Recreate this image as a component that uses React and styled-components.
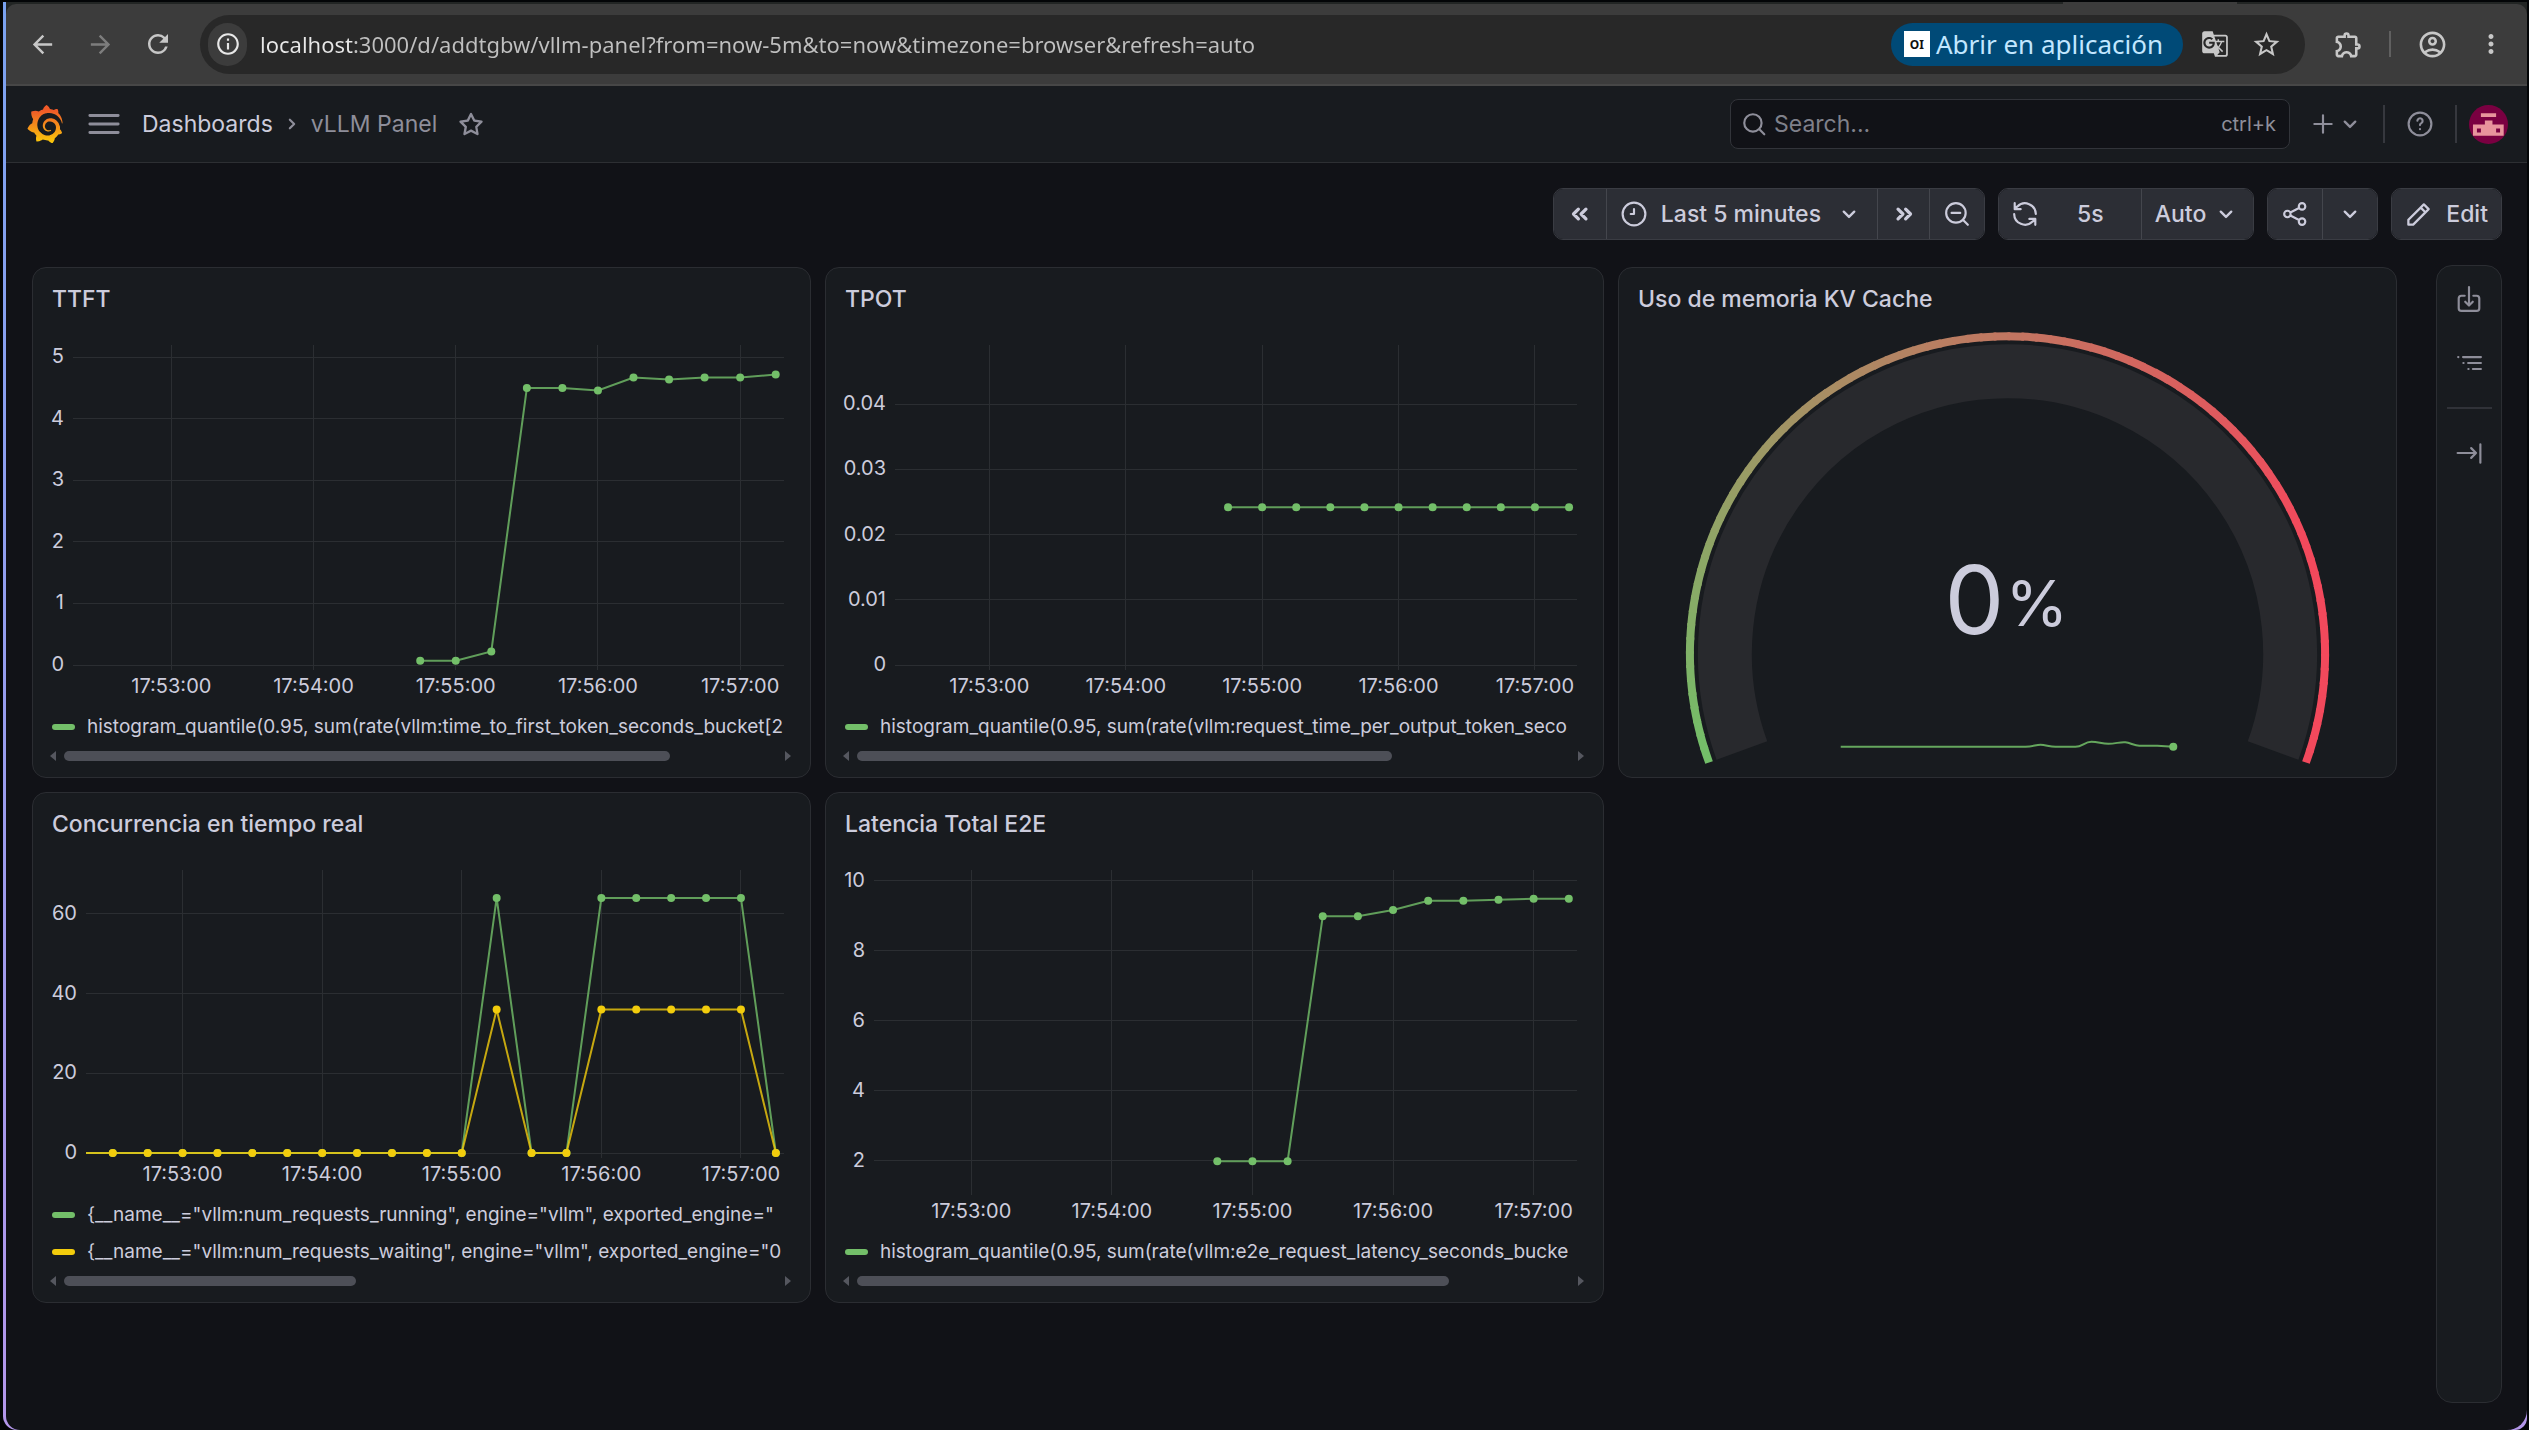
import { useLayoutEffect, useRef, useState } from "react";
import styled, { createGlobalStyle, css } from "styled-components";
import {
  MdArrowBack,
  MdArrowForward,
  MdGTranslate,
  MdMoreVert,
  MdOutlineAccountCircle,
  MdOutlineExtension,
  MdOutlineInfo,
  MdRefresh,
  MdStarBorder,
} from "react-icons/md";
import { SiGrafana } from "react-icons/si";

const GREEN = "#73bf69";
const YELLOW = "#f2cc0c";

// Chart time is in seconds, counted from 17:53:00.
const TIME_START = -41.5;
const TIME_RANGE = 300;
const TIME_TICKS = [
  [0, "17:53:00"],
  [60, "17:54:00"],
  [120, "17:55:00"],
  [180, "17:56:00"],
  [240, "17:57:00"],
];

const every15s = (start, values) =>
  values.map((value, index) => [start + index * 15, value]);

const ttft = every15s(
  105,
  [0.07, 0.07, 0.22, 4.5, 4.5, 4.46, 4.67, 4.64, 4.67, 4.67, 4.72]
);
const tpot = every15s(105, new Array(11).fill(0.0242));
const latency = every15s(
  105,
  [1.99, 1.99, 1.99, 8.98, 8.98, 9.16, 9.42, 9.42, 9.45, 9.48, 9.48]
);
const burst = peak =>
  every15s(-45, [
    ...new Array(12).fill(0),
    peak,
    0,
    0,
    ...new Array(5).fill(peak),
    0,
  ]);

const GlobalStyle = createGlobalStyle`
  *, *::before, *::after {
    box-sizing: border-box;
  }

  body {
    margin: 0;
    background: #030507;
    color: #ccccdc;
    font-family: Inter, "Liberation Sans", sans-serif;
    font-size: 23px;
  }

  button, input {
    font: inherit;
    color: inherit;
  }

  svg {
    display: block;
    flex: none;
  }
`;

const Frame = styled.div`
  display: flex;
  min-height: 100vh;
  padding: 2px 2px 0 3px;
`;

const Outline = styled.div`
  display: flex;
  flex: 1;
  min-width: 0;
  padding-left: 3px;
  border-radius: 0 0 12px 14px;
  background: linear-gradient(180deg, #7aa2f0, #b396ea);
`;

const Window = styled.div`
  display: flex;
  flex: 1;
  flex-direction: column;
  min-width: 0;
  overflow: hidden;
  border-radius: 0 0 20px 14px;
  background: #111217;
`;

const TabStrip = styled.div`
  display: flex;
  justify-content: flex-end;
  height: 2px;
  padding-right: 290px;
  background: #222524;
`;

const ActiveTab = styled.div`
  width: 174px;
  background: #3c3c3c;
`;

const TabGround = styled.div`
  background: #222524;
`;

const BrowserBar = styled.div`
  display: flex;
  align-items: center;
  height: 82px;
  padding: 0 18px;
  border-bottom: 2px solid #474747;
  border-radius: 10px 10px 0 0;
  background: #3c3c3c;
  color: #c7c7c7;
  font-family: "Noto Sans", sans-serif;
`;

const BarButton = styled.button`
  display: flex;
  flex: none;
  align-items: center;
  justify-content: center;
  width: ${({ $width }) => $width || 36}px;
  height: 43px;
  padding: 0;
  border: 0;
  border-radius: 22px;
  background: ${({ $filled }) => ($filled ? "#3c3c3c" : "transparent")};
  color: ${({ $color }) => $color || "inherit"};
`;

const BrowserNav = styled.div`
  display: flex;
  gap: 22px;
  margin-right: 24px;
`;

const AddressBar = styled.div`
  display: flex;
  flex: 1;
  align-items: center;
  height: 59px;
  padding: 0 6px 0 8px;
  border-radius: 30px;
  background: #282828;
`;

/* The host is brighter than the path. */
const Url = styled.input`
  flex: 1;
  min-width: 0;
  height: 43px;
  margin-left: 13px;
  padding: 0;
  border: 0;
  outline: 0;
  background: linear-gradient(90deg, #e8e8e8 94px, #c0c0c0 94px);
  background-clip: text;
  color: transparent;
  font-size: 22px;
`;

const OpenInApp = styled.button`
  display: flex;
  align-items: center;
  gap: 6px;
  height: 43px;
  margin-right: 14px;
  padding: 0 20px 0 13px;
  border: 0;
  border-radius: 22px;
  background: #004a77;
  color: #c2e7ff;
  font-size: 26px;
`;

const AppBadge = styled.span`
  display: flex;
  align-items: center;
  justify-content: center;
  width: 26px;
  height: 26px;
  background: #fff;
  color: #111;
  font-size: 12px;
  font-weight: 700;
`;

const BrowserActions = styled.div`
  display: flex;
  align-items: center;
  gap: 23px;
  margin-left: 25px;
`;

const VerticalRule = styled.div`
  width: 2px;
  height: ${({ $height }) => $height}px;
  background: ${({ $color }) => $color};
`;

const TopNav = styled.header`
  display: flex;
  align-items: center;
  height: 77px;
  padding: 0 19px 0 20px;
  border-bottom: 1px solid #2d2f33;
  background: #181b1f;
  color: #8e8e9a;
`;

const Logo = styled(SiGrafana)`
  width: 38px;
  height: 38px;
  fill: url(#grafana-flame);
`;

const NavButton = styled.button`
  display: flex;
  align-items: center;
  gap: 8px;
  padding: 0;
  border: 0;
  background: transparent;
`;

const MenuButton = styled(NavButton)`
  margin: 0 21px 0 23px;
`;

const Breadcrumbs = styled.nav`
  display: flex;
  flex: 1;
  align-items: center;
  gap: 6px;
`;

const Crumb = styled.a`
  color: ${({ $current }) => ($current ? "#8e8e9a" : "#ccccdc")};
  text-decoration: none;
`;

const StarButton = styled(NavButton)`
  margin-left: 14px;
`;

const SearchBox = styled.label`
  display: flex;
  align-items: center;
  gap: 7px;
  width: 560px;
  height: 50px;
  padding: 0 13px 0 10px;
  border: 1px solid #32343a;
  border-radius: 8px;
  background: #111217;
`;

const SearchInput = styled.input`
  flex: 1;
  min-width: 0;
  padding: 0;
  border: 0;
  outline: 0;
  background: transparent;

  &::placeholder {
    color: #7f808a;
    opacity: 1;
  }
`;

const Shortcut = styled.span`
  font-size: 20px;
`;

const NavActions = styled.div`
  display: flex;
  align-items: center;
  gap: 22px;
  margin-left: 20px;
`;

const AddButton = styled(NavButton)`
  gap: 0;
  margin-right: -3px;
`;

const AvatarButton = styled(NavButton)`
  margin-left: -10px;
`;

const Dashboard = styled.main`
  display: flex;
  flex: 1;
  flex-direction: column;
  gap: 25px;
  padding: 25px 25px 27px 26px;
`;

const Toolbar = styled.div`
  display: flex;
  justify-content: flex-end;
  gap: 13px;
`;

const ButtonGroup = styled.div`
  display: flex;
  height: 52px;
  overflow: hidden;
  border: 1px solid #3a3c43;
  border-radius: 10px;
`;

const ToolButton = styled.button`
  display: flex;
  align-items: center;
  justify-content: center;
  gap: ${({ $gap }) => $gap || 14}px;
  min-width: 52px;
  padding: 0 ${({ $pad }) => $pad || 0}px;
  border: 0;
  background: #2c2e35;
  font-weight: 500;

  & + & {
    border-left: 1px solid #44464d;
  }
`;

const Interval = styled.span`
  padding: 0 24px 0 25px;
`;

const Content = styled.div`
  display: flex;
  flex: 1;
  gap: 39px;
`;

const PanelGrid = styled.div`
  display: grid;
  flex: 1;
  grid-template-columns: repeat(3, minmax(0, 1fr));
  grid-auto-rows: minmax(511px, auto);
  align-content: start;
  gap: 14px;
  padding-top: 2px;
`;

const PanelCard = styled.section`
  display: flex;
  flex-direction: column;
  border: 1px solid #2b2d32;
  border-radius: 14px;
  background: #181b1f;
`;

const PanelTitle = styled.h2`
  margin: 0;
  padding: 0 19px;
  font-size: 23px;
  font-weight: 500;
  line-height: 63px;
`;

const PanelBody = styled.div`
  display: flex;
  flex: 1;
  flex-direction: column;
  padding: 0 14px 16px 17px;
`;

const ChartArea = styled.div`
  flex: 1;
  min-height: 240px;
  overflow: hidden;

  text {
    fill: #ccccdc;
    font-size: 20px;
  }
`;

const LegendRow = styled.div`
  display: flex;
  align-items: center;
  gap: 12px;
  height: 37px;
  padding-left: 2px;
  overflow: hidden;
  font-size: 19px;
  white-space: nowrap;
`;

const Swatch = styled.span`
  flex: none;
  width: 23px;
  height: 6px;
  border-radius: 3px;
  background: ${({ $color }) => $color};
`;

const ScrollBar = styled.div`
  display: flex;
  align-items: center;
  gap: 8px;
  height: 10px;
  margin-top: 6px;
  padding-right: 5px;
`;

const ScrollArrow = styled.span`
  border: 5px solid transparent;
  ${({ $side }) =>
    $side === "left"
      ? css`
          border-left-width: 0;
          border-right: 6px solid #55575f;
        `
      : css`
          border-right-width: 0;
          border-left: 6px solid #55575f;
        `}
`;

const ScrollTrack = styled.div`
  flex: 1;
  height: 10px;
`;

const ScrollThumb = styled.div`
  width: ${({ $size }) => $size}%;
  height: 10px;
  border-radius: 5px;
  background: #4d4f57;
`;

const GaugeSvg = styled.svg`
  flex: 1;
  width: 100%;
  min-height: 0;

  text {
    fill: #ccccdc;
  }
`;

const SideBar = styled.aside`
  display: flex;
  flex-direction: column;
  align-items: center;
  gap: 24px;
  width: 66px;
  padding-top: 13px;
  border: 1px solid #2b2d32;
  border-radius: 16px;
  background: #181b1f;
  color: #8e8e9a;
`;

const SideButton = styled.button`
  display: flex;
  align-items: center;
  justify-content: center;
  width: 40px;
  height: 40px;
  padding: 0;
  border: 0;
  background: transparent;
`;

const SideRule = styled.div`
  width: 45px;
  height: 2px;
  background: #303238;
`;

const LINE_ICONS = {
  menu: "M2 6h20M2 12h20M2 18h20",
  search: "M11 3a8 8 0 1 0 0 16a8 8 0 1 0 0-16M16.7 16.7L21.5 21.5",
  zoomOut: "M11 2a9 9 0 1 0 0 18a9 9 0 1 0 0-18M17.4 17.4L22 22M7 11h8",
  clock: "M12 1.5a10.5 10.5 0 1 0 0 21a10.5 10.5 0 1 0 0-21M12 7.5v4.5H9",
  plus: "M12 4v16M4 12h16",
  help: "M12 1.5a10.5 10.5 0 1 0 0 21a10.5 10.5 0 1 0 0-21M9.6 9a2.4 2.4 0 1 1 3.6 2.2c-.8.4-1.2.9-1.2 1.8M12 16.6v.2",
  sync: "M22 12A10 10 0 0 0 5 5L2.5 7M2.5 2v5.5h5.5M2 12a10 10 0 0 0 17 7l2.5-2M21.5 22v-5.5H16",
  share:
    "M18.5 2a3 3 0 1 0 0 6a3 3 0 1 0 0-6M5 9a3 3 0 1 0 0 6a3 3 0 1 0 0-6M18.5 16a3 3 0 1 0 0 6a3 3 0 1 0 0-6M7.7 10.6l8-4.2M7.7 13.4l8 4.2",
  down: "M7.5 10l4.5 4.5L16.5 10",
  right: "M10 8l4 4l-4 4",
  back: "M10.5 7.5L6 12l4.5 4.5M17.5 7.5L13 12l4.5 4.5",
  forward: "M6.5 7.5L11 12l-4.5 4.5M13.5 7.5L18 12l-4.5 4.5",
  import:
    "M8 9H5a2.5 2.5 0 0 0-2.5 2.5v9A2.5 2.5 0 0 0 5 23h14a2.5 2.5 0 0 0 2.5-2.5v-9A2.5 2.5 0 0 0 19 9h-3M12 1v16M8.5 14.5L12 18l3.5-3.5",
  outline:
    "M2 6.5h.2M6.5 6.5H23M6.8 12h.2M11.2 12H23M11.4 17.5h.2M15.6 17.5H23",
  collapse: "M1.5 12h17M14 7.5l4.5 4.5l-4.5 4.5M22.5 4v17",
};

const LineIcon = ({ name, size = 26, weight = 2 }) => (
  <svg
    width={size}
    height={size}
    viewBox="0 0 24 24"
    fill="none"
    stroke="currentColor"
    strokeWidth={weight}
    strokeLinecap="round"
    strokeLinejoin="round"
    aria-hidden="true"
  >
    <path d={LINE_ICONS[name]} />
  </svg>
);

const StarIcon = () => (
  <svg width="28" height="28" viewBox="0 0 24 24" fill="currentColor">
    <path d="M22,9.67A1,1,0,0,0,21.14,9l-5.69-.83L12.9,3a1,1,0,0,0-1.8,0L8.55,8.16,2.86,9a1,1,0,0,0-.81.68,1,1,0,0,0,.25,1l4.13,4-1,5.68A1,1,0,0,0,6.9,21.44L12,18.77l5.1,2.67a.93.93,0,0,0,.46.12,1,1,0,0,0,.59-.19,1,1,0,0,0,.4-1l-1-5.68,4.13-4A1,1,0,0,0,22,9.67Zm-6.15,4a1,1,0,0,0-.29.88l.72,4.2-3.76-2a1.06,1.06,0,0,0-.94,0l-3.76,2,.72-4.2a1,1,0,0,0-.29-.88l-3-3,4.21-.61a1,1,0,0,0,.76-.55L12,5.7l1.88,3.82a1,1,0,0,0,.76.55l4.21.61Z" />
  </svg>
);

const PenIcon = () => (
  <svg width="27" height="27" viewBox="0 0 24 24" fill="currentColor">
    <path d="M22,7.24a1,1,0,0,0-.29-.71L17.47,2.29A1,1,0,0,0,16.76,2a1,1,0,0,0-.71.29L13.22,5.12h0L2.29,16.05a1,1,0,0,0-.29.71V21a1,1,0,0,0,1,1H7.24A1,1,0,0,0,8,21.71L18.87,10.78h0L21.71,8a1.19,1.19,0,0,0,.22-.33,1,1,0,0,0,0-.24.7.7,0,0,0,0-.14ZM6.83,20H4V17.17l9.93-9.93,2.83,2.83ZM18.17,8.66,15.34,5.83l1.42-1.41,2.82,2.82Z" />
  </svg>
);

const Avatar = () => (
  <svg width="39" height="39" viewBox="0 0 118 118">
    <circle cx="59" cy="59" r="59" fill="#7a0041" />
    <path
      fill="#e8949c"
      fillRule="evenodd"
      d="M36 25h46v11H36zM48 47h23v12h34v34H12V59h36zM24 71v12h12V71zM82 71v12h12V71z"
    />
  </svg>
);

const GradientDefs = () => (
  <svg width="0" height="0" aria-hidden="true">
    <linearGradient id="grafana-flame" x1="0" y1="0" x2="0" y2="1">
      <stop offset="0.15" stopColor="#f05a28" />
      <stop offset="1" stopColor="#fbca0a" />
    </linearGradient>
  </svg>
);

const TimeChart = ({ axisWidth, min = 0, max, ticks, series }) => {
  const areaRef = useRef(null);
  const [size, setSize] = useState({ width: 0, height: 0 });

  useLayoutEffect(() => {
    const area = areaRef.current;
    const measure = () =>
      setSize({ width: area.clientWidth, height: area.clientHeight });
    const observer = new ResizeObserver(measure);

    measure();
    observer.observe(area);

    return () => observer.disconnect();
  }, []);

  const left = axisWidth;
  const right = size.width - 12;
  const top = 14;
  const bottom = size.height - 43;
  const toX = time =>
    left + ((time - TIME_START) / TIME_RANGE) * (right - left);
  const toY = value =>
    bottom - ((value - min) / (max - min)) * (bottom - top);
  const snap = n => Math.floor(n) + 0.5;
  const clipId = `plot-${axisWidth}`;

  return (
    <ChartArea ref={areaRef}>
      {size.width > 0 && (
        <svg width={size.width} height={size.height - 4}>
          <clipPath id={clipId}>
            <rect x={left} y="0" width={right - left + 6} height={size.height} />
          </clipPath>
          <g stroke="#2b2e32">
            {ticks.map(tick => (
              <line
                key={tick}
                x1={left}
                x2={right}
                y1={snap(toY(tick))}
                y2={snap(toY(tick))}
              />
            ))}
            {TIME_TICKS.map(([time]) => (
              <line
                key={time}
                x1={snap(toX(time))}
                x2={snap(toX(time))}
                y1={top}
                y2={bottom + 5}
              />
            ))}
          </g>
          {ticks.map(tick => (
            <text key={tick} x={left - 9} y={toY(tick) + 6} textAnchor="end">
              {tick}
            </text>
          ))}
          {TIME_TICKS.map(([time, label]) => (
            <text key={time} x={toX(time)} y={bottom + 28} textAnchor="middle">
              {label}
            </text>
          ))}
          <g clipPath={`url(#${clipId})`}>
            {series.map(({ color, points }) => (
              <g key={color} fill={color}>
                <polyline
                  fill="none"
                  stroke={color}
                  strokeWidth="2"
                  strokeOpacity="0.8"
                  points={points
                    .map(([time, value]) => `${toX(time)},${toY(value)}`)
                    .join(" ")}
                />
                {points.map(([time, value]) => (
                  <circle key={time} cx={toX(time)} cy={toY(value)} r="4" />
                ))}
              </g>
            ))}
          </g>
        </svg>
      )}
    </ChartArea>
  );
};

const ChartPanel = ({ title, legend, scroll, ...chart }) => (
  <PanelCard>
    <PanelTitle>{title}</PanelTitle>
    <PanelBody>
      <TimeChart {...chart} />
      {legend.map(({ color, label }) => (
        <LegendRow key={label}>
          <Swatch $color={color} />
          {label}
        </LegendRow>
      ))}
      <ScrollBar>
        <ScrollArrow $side="left" />
        <ScrollTrack>
          <ScrollThumb $size={scroll} />
        </ScrollTrack>
        <ScrollArrow $side="right" />
      </ScrollBar>
    </PanelBody>
  </PanelCard>
);

const GAUGE_SWEEP = 220;
const GAUGE_STEPS = 88;

const gaugePoint = (radius, fraction) => {
  const angle = ((fraction - 0.5) * GAUGE_SWEEP * Math.PI) / 180;

  return `${radius * Math.sin(angle)} ${-radius * Math.cos(angle)}`;
};

const gaugeArc = (radius, from, to) => {
  const large = (to - from) * GAUGE_SWEEP > 180 ? 1 : 0;

  return `M${gaugePoint(radius, from)}A${radius} ${radius} 0 ${large} 1 ${gaugePoint(
    radius,
    to
  )}`;
};

// Green blends into red up to the 80% threshold and stays red after it.
const gaugeColor = fraction => {
  const mix = Math.min(fraction / 0.8, 1);
  const channel = (from, to) => Math.round(from + (to - from) * mix);

  return `rgb(${channel(115, 242)}, ${channel(191, 73)}, ${channel(105, 92)})`;
};

const GaugePanel = () => (
  <PanelCard>
    <PanelTitle>Uso de memoria KV Cache</PanelTitle>
    <GaugeSvg viewBox="-389 -323 778 446">
      <path
        d={gaugeArc(283, 0, 1)}
        fill="none"
        stroke="#28292d"
        strokeWidth="54"
      />
      {Array.from({ length: GAUGE_STEPS }, (_, step) => (
        <path
          key={step}
          d={gaugeArc(
            318,
            step / GAUGE_STEPS,
            Math.min((step + 1.2) / GAUGE_STEPS, 1)
          )}
          fill="none"
          stroke={gaugeColor(step / GAUGE_STEPS)}
          strokeWidth="8"
        />
      ))}
      <text x="-63" y="-20" fontSize="95">
        0
      </text>
      <text x="-2" y="-28" fontSize="64">
        %
      </text>
      <path
        d="M-167 93H18C26 93 28 91 33 91S42 93 48 93H68C75 93 77 88 84 88S94 90 101 90S113 88 118 88.500S127 92 132 92H150L166 93"
        fill="none"
        stroke={GREEN}
        strokeWidth="2"
        strokeOpacity="0.85"
      />
      <circle cx="166" cy="93" r="4" fill={GREEN} />
    </GaugeSvg>
  </PanelCard>
);

const Browser = () => (
  <>
    <TabStrip>
      <ActiveTab />
    </TabStrip>
    <TabGround>
      <BrowserBar>
        <BrowserNav>
          <BarButton aria-label="Back">
            <MdArrowBack size={29} />
          </BarButton>
          <BarButton aria-label="Forward" $color="#7d7d7d">
            <MdArrowForward size={29} />
          </BarButton>
          <BarButton aria-label="Reload">
            <MdRefresh size={30} />
          </BarButton>
        </BrowserNav>
        <AddressBar>
          <BarButton
            aria-label="Site information"
            $width={39}
            $filled
            $color="#e8e8e8"
          >
            <MdOutlineInfo size={26} />
          </BarButton>
          <Url
            aria-label="Address"
            spellCheck={false}
            defaultValue="localhost:3000/d/addtgbw/vllm-panel?from=now-5m&to=now&timezone=browser&refresh=auto"
          />
          <OpenInApp>
            <AppBadge>OI</AppBadge>
            Abrir en aplicación
          </OpenInApp>
          <BarButton aria-label="Translate" $width={36}>
            <MdGTranslate size={28} />
          </BarButton>
          <BarButton aria-label="Bookmark" $width={66}>
            <MdStarBorder size={31} />
          </BarButton>
        </AddressBar>
        <BrowserActions>
          <BarButton aria-label="Extensions">
            <MdOutlineExtension size={31} />
          </BarButton>
          <VerticalRule $height={26} $color="#606060" />
          <BarButton aria-label="Profile">
            <MdOutlineAccountCircle size={31} />
          </BarButton>
          <BarButton aria-label="More">
            <MdMoreVert size={30} />
          </BarButton>
        </BrowserActions>
      </BrowserBar>
    </TabGround>
  </>
);

const Nav = () => (
  <TopNav>
    <Logo />
    <MenuButton aria-label="Menu">
      <LineIcon name="menu" size={34} />
    </MenuButton>
    <Breadcrumbs>
      <Crumb href="#dashboards">Dashboards</Crumb>
      <LineIcon name="right" size={26} />
      <Crumb href="#panel" $current>
        vLLM Panel
      </Crumb>
      <StarButton aria-label="Mark as favorite">
        <StarIcon />
      </StarButton>
    </Breadcrumbs>
    <SearchBox>
      <LineIcon name="search" size={26} />
      <SearchInput type="text" aria-label="Search" placeholder="Search..." />
      <Shortcut>ctrl+k</Shortcut>
    </SearchBox>
    <NavActions>
      <AddButton aria-label="New">
        <LineIcon name="plus" size={26} />
        <LineIcon name="down" size={28} />
      </AddButton>
      <VerticalRule $height={38} $color="#36383e" />
      <NavButton aria-label="Help">
        <LineIcon name="help" size={26} />
      </NavButton>
      <VerticalRule $height={38} $color="#36383e" />
      <AvatarButton aria-label="Profile">
        <Avatar />
      </AvatarButton>
    </NavActions>
  </TopNav>
);

const DashboardToolbar = () => (
  <Toolbar>
    <ButtonGroup>
      <ToolButton aria-label="Move time range backwards">
        <LineIcon name="back" weight={3} />
      </ToolButton>
      <ToolButton $pad={14}>
        <LineIcon name="clock" />
        Last 5 minutes
        <LineIcon name="down" size={28} />
      </ToolButton>
      <ToolButton aria-label="Move time range forwards">
        <LineIcon name="forward" weight={3} />
      </ToolButton>
      <ToolButton aria-label="Zoom out" $pad={14}>
        <LineIcon name="zoomOut" />
      </ToolButton>
    </ButtonGroup>
    <ButtonGroup>
      <ToolButton $pad={13}>
        <LineIcon name="sync" />
        <Interval>5s</Interval>
      </ToolButton>
      <ToolButton $pad={13} $gap={6}>
        Auto
        <LineIcon name="down" size={28} />
      </ToolButton>
    </ButtonGroup>
    <ButtonGroup>
      <ToolButton aria-label="Share" $pad={14}>
        <LineIcon name="share" />
      </ToolButton>
      <ToolButton aria-label="Share options" $pad={13}>
        <LineIcon name="down" size={28} />
      </ToolButton>
    </ButtonGroup>
    <ButtonGroup>
      <ToolButton $pad={13}>
        <PenIcon />
        Edit
      </ToolButton>
    </ButtonGroup>
  </Toolbar>
);

const App = () => (
  <Frame>
    <GlobalStyle />
    <Outline>
      <Window>
        <Browser />
        <Nav />
        <Dashboard>
          <DashboardToolbar />
          <Content>
            <PanelGrid>
              <ChartPanel
                title="TTFT"
                axisWidth={23}
                max={5.2}
                ticks={[0, 1, 2, 3, 4, 5]}
                series={[{ color: GREEN, points: ttft }]}
                legend={[
                  {
                    color: GREEN,
                    label:
                      "histogram_quantile(0.95, sum(rate(vllm:time_to_first_token_seconds_bucket[2",
                  },
                ]}
                scroll={85}
              />
              <ChartPanel
                title="TPOT"
                axisWidth={52}
                max={0.0491}
                ticks={[0, 0.01, 0.02, 0.03, 0.04]}
                series={[{ color: GREEN, points: tpot }]}
                legend={[
                  {
                    color: GREEN,
                    label:
                      "histogram_quantile(0.95, sum(rate(vllm:request_time_per_output_token_seco",
                  },
                ]}
                scroll={75}
              />
              <GaugePanel />
              <ChartPanel
                title="Concurrencia en tiempo real"
                axisWidth={36}
                max={71}
                ticks={[0, 20, 40, 60]}
                series={[
                  { color: GREEN, points: burst(64) },
                  { color: YELLOW, points: burst(36) },
                ]}
                legend={[
                  {
                    color: GREEN,
                    label:
                      '{__name__="vllm:num_requests_running", engine="vllm", exported_engine="',
                  },
                  {
                    color: YELLOW,
                    label:
                      '{__name__="vllm:num_requests_waiting", engine="vllm", exported_engine="0',
                  },
                ]}
                scroll={41}
              />
              <ChartPanel
                title="Latencia Total E2E"
                axisWidth={31}
                min={1.17}
                max={10.3}
                ticks={[2, 4, 6, 8, 10]}
                series={[{ color: GREEN, points: latency }]}
                legend={[
                  {
                    color: GREEN,
                    label:
                      "histogram_quantile(0.95, sum(rate(vllm:e2e_request_latency_seconds_bucke",
                  },
                ]}
                scroll={83}
              />
            </PanelGrid>
            <SideBar>
              <SideButton aria-label="Export">
                <LineIcon name="import" />
              </SideButton>
              <SideButton aria-label="Outline">
                <LineIcon name="outline" />
              </SideButton>
              <SideRule />
              <SideButton aria-label="Collapse">
                <LineIcon name="collapse" />
              </SideButton>
            </SideBar>
          </Content>
        </Dashboard>
      </Window>
    </Outline>
    <GradientDefs />
  </Frame>
);

export default App;
